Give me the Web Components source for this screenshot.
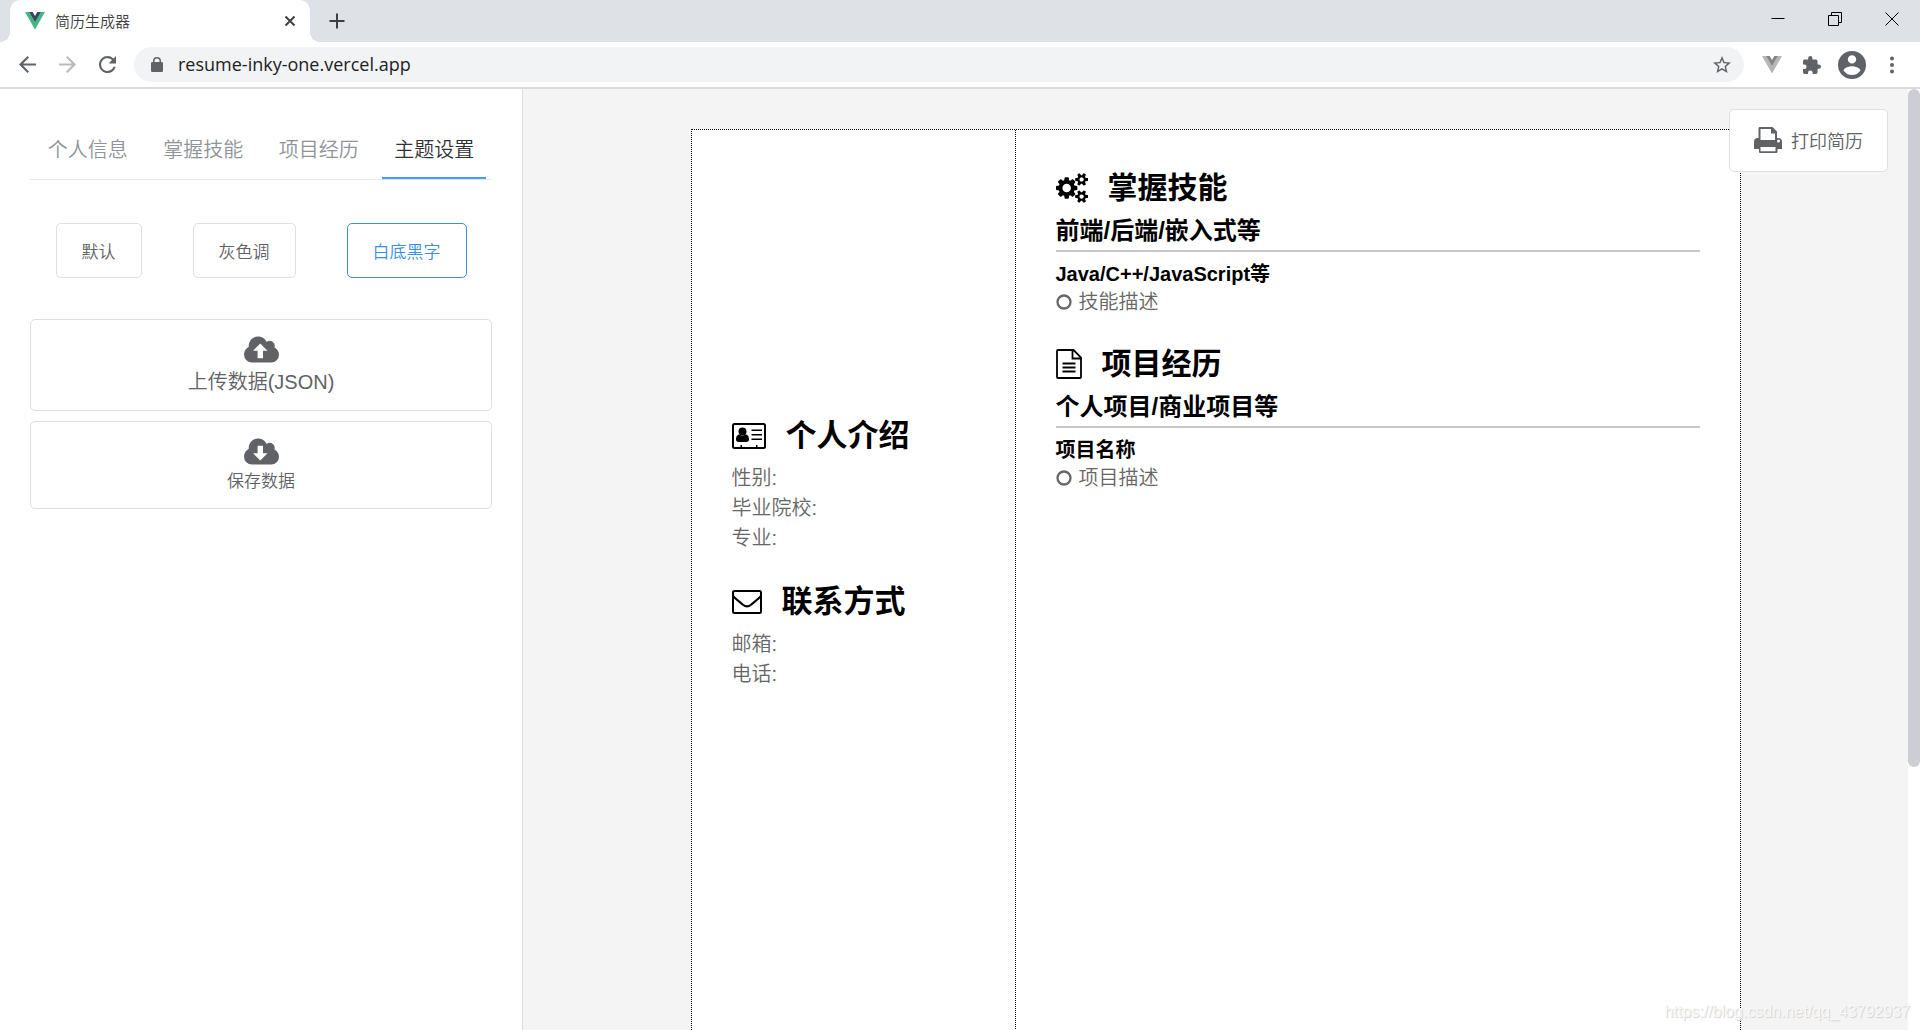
<!DOCTYPE html>
<html lang="zh-CN">
<head>
<meta charset="utf-8">
<title>简历生成器</title>
<style>
html,body{margin:0;height:100%;overflow:hidden}
body{font-family:"Liberation Sans","Noto Sans CJK SC",sans-serif;font-weight:350;color:#606266;background:#fff}
</style>
</head>
<body>
<browser-window>
  <tab-strip slot="tabs">简历生成器</tab-strip>
  <address-bar slot="toolbar" url="resume-inky-one.vercel.app"></address-bar>
  <side-panel slot="page">
    <tab-nav slot="nav" items="个人信息,掌握技能,项目经历,主题设置" active="3"></tab-nav>
    <theme-button slot="themes">默认</theme-button>
    <theme-button slot="themes">灰色调</theme-button>
    <theme-button slot="themes" active>白底黑字</theme-button>
    <data-button icon="cloud-up" large>上传数据(JSON)</data-button>
    <data-button icon="cloud-down">保存数据</data-button>
  </side-panel>
  <resume-stage slot="page">
    <resume-sheet>
      <resume-section slot="aside" icon="id-card" heading="个人介绍" class="aside">
        <info-line>性别:</info-line>
        <info-line>毕业院校:</info-line>
        <info-line>专业:</info-line>
      </resume-section>
      <resume-section slot="aside" icon="mail" heading="联系方式" class="aside">
        <info-line>邮箱:</info-line>
        <info-line>电话:</info-line>
      </resume-section>
      <resume-section icon="cogs" heading="掌握技能">
        <resume-entry category="前端/后端/嵌入式等" name="Java/C++/JavaScript等">技能描述</resume-entry>
      </resume-section>
      <resume-section icon="file" heading="项目经历">
        <resume-entry category="个人项目/商业项目等" name="项目名称">项目描述</resume-entry>
      </resume-section>
    </resume-sheet>
    <print-button slot="float">打印简历</print-button>
  </resume-stage>
  <page-mark slot="mark">https://blog.csdn.net/qq_43792937</page-mark>
</browser-window>

<script>
const ICONS = {
  vue: [20,18,'<path fill="#41b883" d="M0 0h4l6 10.200L16 0h4L10 17.500z"/><path fill="#35495e" d="M4 0h3.700L10 4l2.300-4H16l-6 10.300z"/>'],
  'vue-grey': [20,18,'<path fill="#b5b5b5" d="M0 0h4l6 10.200L16 0h4L10 17.500z"/><path fill="#858585" d="M4 0h3.700L10 4l2.300-4H16l-6 10.300z"/>'],
  close: [12,12,'<path d="M1.500 1.500l9 9m0-9l-9 9" fill="none" stroke="currentColor" stroke-width="2"/>'],
  plus: [16,16,'<path d="M8 .5v15M.5 8h15" fill="none" stroke="currentColor" stroke-width="2"/>'],
  back: [16,16,'<path fill="currentColor" d="M16 7H3.830l5.590-5.590L8 0 0 8l8 8 1.410-1.410L3.830 9H16z"/>'],
  forward: [16,16,'<path fill="currentColor" d="M8 0L6.590 1.410 12.170 7H0v2h12.170l-5.580 5.590L8 16l8-8z"/>'],
  reload: [16,16,'<path fill="currentColor" d="M13.650 2.350A7.960 7.960 0 0 0 8 0a8 8 0 1 0 7.730 10h-2.080A6 6 0 1 1 8 2c1.660 0 3.140.690 4.220 1.780L9 7h7V0z"/>'],
  lock: [12,15,'<path fill="currentColor" fill-rule="evenodd" d="M1.300 5H2V4a4 4 0 0 1 8 0v1h.700A1.300 1.300 0 0 1 12 6.300v7.400a1.300 1.300 0 0 1-1.300 1.300H1.300A1.300 1.300 0 0 1 0 13.700V6.300A1.300 1.300 0 0 1 1.300 5zm2.200 0h5V4a2.500 2.500 0 0 0-5 0z"/>'],
  star: [20,19,'<path fill="currentColor" d="M20 7.240l-7.190-.620L10 0 7.190 6.630 0 7.240l5.460 4.730L3.820 19 10 15.270 16.180 19l-1.630-7.030zM10 13.400l-3.760 2.270 1-4.280-3.320-2.880 4.380-.380L10 4.100l1.710 4.040 4.380.380-3.320 2.880 1 4.280z"/>'],
  puzzle: [21,21,'<path fill="currentColor" d="M18.500 10H17V6a2 2 0 0 0-2-2h-4V2.500a2.500 2.500 0 0 0-5 0V4H2a2 2 0 0 0-2 2v3.800h1.500a2.700 2.700 0 0 1 0 5.400H0V19a2 2 0 0 0 2 2h3.800v-1.500a2.700 2.700 0 0 1 5.400 0V21H15a2 2 0 0 0 2-2v-4h1.500a2.500 2.500 0 0 0 0-5z"/>'],
  account: [20,20,'<path fill="currentColor" d="M10 0a10 10 0 1 0 0 20 10 10 0 0 0 0-20zm0 3a3 3 0 1 1 0 6 3 3 0 0 1 0-6zm0 14.200a7.200 7.200 0 0 1-6-3.220c.030-1.990 4-3.080 6-3.080 1.990 0 5.970 1.090 6 3.080a7.200 7.200 0 0 1-6 3.220z"/>'],
  dots: [4,18,'<g fill="currentColor"><circle cx="2" cy="2.500" r="2"/><circle cx="2" cy="9" r="2"/><circle cx="2" cy="15.500" r="2"/></g>'],
  min: [14,14,'<path stroke="currentColor" d="M.5 6.500h13"/>'],
  restore: [14,14,'<path fill="none" stroke="currentColor" d="M.5 3.500h10v10H.5zM3.500 3V.5h10v10H11"/>'],
  exit: [14,14,'<path fill="none" stroke="currentColor" d="M.5.500l13 13m0-13l-13 13"/>'],
  'cloud-up': [35,27,'<path fill="currentColor" d="M8 26.500A8 8 0 0 1 0 18.500c0-3.300 1.900-6 4.700-7.500C4.500 4.800 8.500.5 14 .5c4 0 7.100 2.200 8.600 5.500a5 5 0 0 1 7.800 5.600c2.800 1.300 4.600 4 4.600 7.100a7.800 7.800 0 0 1-7.800 7.800z"/><path fill="#fff" d="M16.300 7.500l7.200 7.200H19v7.500h-5.400v-7.500H9.100z"/>'],
  'cloud-down': [35,27,'<path fill="currentColor" d="M8 26.500A8 8 0 0 1 0 18.500c0-3.300 1.900-6 4.700-7.500C4.500 4.800 8.500.5 14 .5c4 0 7.100 2.200 8.600 5.500a5 5 0 0 1 7.800 5.600c2.800 1.300 4.600 4 4.600 7.100a7.800 7.800 0 0 1-7.800 7.800z"/><path fill="#fff" d="M16.300 22.500l7.200-7.200H19V7.800h-5.400v7.500H9.100z"/>'],
  printer: [28,26,'<path fill="currentColor" fill-rule="evenodd" d="M6 0h12.500L23 4.500V11h1.500c2 0 3.500 1.500 3.500 3.500V22h-4.500v2.500c0 1-.5 1.500-1.500 1.500H6.500c-1 0-1.500-.5-1.500-1.500V22H0v-7.500C0 12.500 1.500 11 3.500 11H4.500V1.500C4.500.5 5 0 6 0zm.5 2v11H21V6.500h-4V2zm18 10.500a1.500 1.500 0 1 0 0 3 1.500 1.500 0 0 0 0-3zM6.500 20v4.300h15V20z"/>'],
  'id-card': [34,26,'<rect x="1" y="1" width="32" height="24" rx="1.500" fill="none" stroke="currentColor" stroke-width="2"/><g fill="currentColor"><circle cx="10.500" cy="8.500" r="4"/><path d="M7.500 11.500c-2.500 0-3.500 2.500-3.500 5 0 1.500 1 2.500 2.500 2.500h8c1.500 0 2.500-1 2.500-2.500 0-2.500-1-5-3.500-5-1.800 1.500-4.200 1.500-6 0zM19.500 6.500H30v1.600H19.500zM19.500 11H30v1.600H19.500zM19.500 15.500H30v1.600H19.500zM8.500 22h1.500v3H8.500zM24 22h1.500v3H24z"/></g>'],
  mail: [30,24,'<rect x="1" y="1" width="28" height="22" rx="1.500" fill="none" stroke="currentColor" stroke-width="2"/><path d="M1 6c3 3.500 7 6 10 8.700 2.800 2.300 5.200 2.300 8 0C22 12 26 9.500 29 6" fill="none" stroke="currentColor" stroke-width="2"/>'],
  file: [26,30,'<path d="M2 1h15.500L25 8.500V28a1 1 0 0 1-1 1H2a1 1 0 0 1-1-1V2a1 1 0 0 1 1-1zM16.500 1.500V9.500H25M6.500 14.500h13M6.500 18.500h13M6.500 22.500h13" fill="none" stroke="currentColor" stroke-width="1.800"/>'],
  ring: [16,16,'<circle cx="8" cy="8" r="6.500" fill="none" stroke="currentColor" stroke-width="2.300"/>'],
  cogs: [1920,1792,'<path fill="currentColor" d="M896 896q0-106-75-181t-181-75-181 75-75 181 75 181 181 75 181-75 75-181zm768 512q0-52-38-90t-90-38-90 38-38 90q0 53 37.500 90.500t90.500 37.500 90.500-37.500 37.500-90.500zm0-1024q0-52-38-90t-90-38-90 38-38 90q0 53 37.500 90.500t90.500 37.500 90.500-37.500 37.500-90.500zm-384 421v185q0 10-7 19.500t-16 10.500l-155 24q-11 35-32 76 34 48 90 115 7 11 7 20 0 12-7 19-23 30-82.500 89.500t-78.500 59.500q-11 0-21-7l-115-90q-37 19-77 31-11 108-23 155-7 24-30 24h-186q-11 0-20-7.500t-10-17.500l-23-153q-34-10-75-31l-118 89q-7 7-20 7-11 0-21-8-144-133-144-160 0-9 7-19 10-14 41-53t47-61q-23-44-35-82l-152-24q-10-1-17-9.500t-7-19.500v-185q0-10 7-19.500t16-10.500l155-24q11-35 32-76-34-48-90-115-7-11-7-20 0-12 7-20 22-30 82-89t79-59q11 0 21 7l115 90q34-18 77-32 11-108 23-154 7-24 30-24h186q11 0 20 7.500t10 17.500l23 153q34 10 75 31l118-89q8-7 20-7 11 0 21 8 144 133 144 160 0 8-7 19-12 16-42 54t-45 60q23 48 34 82l152 23q10 2 17 10.500t7 19.500zm640 533v140q0 16-149 31-12 27-30 52 51 113 51 138 0 4-4 7-122 71-124 71-8 0-46-47t-52-68q-20 2-30 2t-30-2q-14 21-52 68t-46 47q-2 0-124-71-4-3-4-7 0-25 51-138-18-25-30-52-149-15-149-31v-140q0-16 149-31 13-29 30-52-51-113-51-138 0-4 4-7 4-2 35-20t59-34 30-16q8 0 46 46.500t52 67.500q20-2 30-2t30 2q51-71 92-112l6-2q4 0 124 70 4 3 4 7 0 25-51 138 17 23 30 52 149 15 149 31zm0-1024v140q0 16-149 31-12 27-30 52 51 113 51 138 0 4-4 7-122 71-124 71-8 0-46-47t-52-68q-20 2-30 2t-30-2q-14 21-52 68t-46 47q-2 0-124-71-4-3-4-7 0-25 51-138-18-25-30-52-149-15-149-31v-140q0-16 149-31 13-29 30-52-51-113-51-138 0-4 4-7 4-2 35-20t59-34 30-16q8 0 46 46.500t52 67.500q20-2 30-2t30 2q51-71 92-112l6-2q4 0 124 70 4 3 4 7 0 25-51 138 17 23 30 52 149 15 149 31z"/>']
};
const icon = (name, w) => {
  const [vw, vh, body] = ICONS[name];
  const width = w || vw;
  return `<svg class="i" aria-hidden="true" width="${width}" height="${Math.round(width * vh / vw)}" viewBox="0 0 ${vw} ${vh}">${body}</svg>`;
};
const BASE = `:host,*{box-sizing:border-box}.i{display:block;flex:none}button{font:inherit;color:inherit;background:none;border:0;padding:0;margin:0;cursor:pointer}`;
const define = (tag, css, html) => customElements.define(tag, class extends HTMLElement {
  constructor() { super(); this.attachShadow({ mode: 'open' }); }
  connectedCallback() { this.shadowRoot.innerHTML = `<style>${BASE}${css}</style>${html(this)}`; }
});

define('browser-window', `
  :host{display:flex;flex-direction:column;height:100vh;position:relative;overflow:hidden}
  main{flex:1;min-height:0;display:flex;border-top:2px solid #d8dae0;overflow:hidden}
  .track{flex:none;width:12px;background:#fff}
  .thumb{height:72%;border-radius:6px;background:#cdced3}`,
  () => `<slot name="tabs"></slot><slot name="toolbar"></slot>
  <main><slot name="page"></slot><div class="track"><div class="thumb"></div></div></main><slot name="mark"></slot>`);

define('tab-strip', `
  :host{display:flex;height:42px;background:#dee1e6;color:#3c4043;font-size:15px;flex:none}
  .tab{display:flex;align-items:center;gap:10px;width:300px;margin-left:10px;padding:0 14px 0 15px;background:#fff;border-radius:10px 10px 0 0;position:relative}
  .tab::before,.tab::after{content:"";position:absolute;bottom:0;width:10px;height:10px}
  .tab::before{left:-10px;background:radial-gradient(circle at 0 0,#dee1e6 10px,#fff 10px)}
  .tab::after{right:-10px;background:radial-gradient(circle at 100% 0,#dee1e6 10px,#fff 10px)}
  .title{flex:1;padding-bottom:2px}
  .add{padding:0 19px}
  .win{display:flex;margin-left:auto;color:#000}
  .win button{width:57px;display:grid;place-items:center;padding-bottom:5px}`,
  () => `<div class="tab">${icon('vue')}<span class="title"><slot></slot></span><button aria-label="关闭标签页">${icon('close')}</button></div>
  <button class="add" aria-label="新标签页">${icon('plus')}</button>
  <div class="win"><button aria-label="最小化">${icon('min')}</button><button aria-label="还原">${icon('restore')}</button><button aria-label="关闭">${icon('exit')}</button></div>`);

define('address-bar', `
  :host{display:flex;align-items:center;height:45px;flex:none;background:#fff;color:#5f6368;padding:0 26px 0 19px}
  .nav{display:flex;gap:23px;margin-right:18px}
  .off{color:#bababb}
  form{flex:1;display:flex;align-items:center;gap:15px;height:35px;border-radius:18px;background:#f1f3f4;padding:0 13px 0 17px}
  input{flex:1;min-width:0;border:0;outline:0;background:none;padding:0 0 2px;color:#202124;font:400 18px/24px "Open Sans","Noto Sans CJK SC",sans-serif}
  .ext{display:flex;align-items:center;margin-left:18px;gap:21px}
  .who{margin:0 3px 0 -4px}`,
  el => `<div class="nav"><button aria-label="后退">${icon('back',17)}</button><button class="off" aria-label="前进">${icon('forward',17)}</button><button aria-label="重新加载">${icon('reload',17)}</button></div>
  <form>${icon('lock')}<input type="text" aria-label="网址" value="${el.getAttribute('url')}"><button type="button" aria-label="收藏">${icon('star',18)}</button></form>
  <div class="ext"><button aria-label="Vue">${icon('vue-grey')}</button><button aria-label="扩展程序">${icon('puzzle',18)}</button><button class="who" aria-label="用户">${icon('account',28)}</button><button aria-label="菜单">${icon('dots')}</button></div>`);

define('side-panel', `
  :host{display:flex;flex-direction:column;flex:0 0 523px;border-right:1px solid #dcdcdc;background:#fff;padding:30px}
  .themes{display:flex;justify-content:space-around;margin:43px 0 41px}
  .data{display:flex;flex-direction:column;gap:10px}`,
  () => `<slot name="nav"></slot><div class="themes"><slot name="themes"></slot></div><div class="data"><slot></slot></div>`);

define('tab-nav', `
  :host{display:block;border-bottom:1px solid #e4e7ed}
  nav{display:flex;justify-content:space-around}
  button{width:104px;height:60px;font-size:20px;color:#909399;border-bottom:2px solid transparent}
  .on{color:#303133;border-color:#409eff}`,
  el => `<nav role="tablist">${el.getAttribute('items').split(',').map((t, i) => {
    const on = i == el.getAttribute('active');
    return `<button role="tab" aria-selected="${on}" class="${on ? 'on' : ''}">${t}</button>`;
  }).join('')}</nav>`);

define('theme-button', `
  :host{display:block}
  button{height:55px;padding:0 25px;border:1px solid #dcdfe6;border-radius:5px;background:#fff;font-size:17px}
  :host([active]) button{color:#3a8ee6;border-color:#3a8ee6}`,
  () => `<button><slot></slot></button>`);

define('data-button', `
  :host{display:block;font-size:17px;line-height:24px}
  :host([large]){font-size:20px;line-height:28px}
  button{display:flex;flex-direction:column;align-items:center;gap:5px;width:100%;padding:16px 16px 14px;border:1px solid #dcdfe6;border-radius:5px;background:#fff}`,
  el => `<button>${icon(el.getAttribute('icon'))}<span><slot></slot></span></button>`);

define('resume-stage', `
  :host{display:flex;flex:1;justify-content:center;align-items:flex-start;background:#f4f4f4;padding:40px 0;position:relative;overflow:hidden}
  ::slotted([slot=float]){position:absolute;top:20px;right:20px}`,
  () => `<slot></slot><slot name="float"></slot>`);

define('resume-sheet', `
  :host{display:flex;flex:0 0 1050px;aspect-ratio:210/297;border:1px dotted #000;background:#fff}
  aside,article{display:flex;flex-direction:column}
  aside{flex:0 0 324px;border-right:1px dotted #000;padding:286px 40px 0;gap:29px}
  article{flex:1;padding:38px 40px 0;gap:28px}`,
  () => `<aside><slot name="aside"></slot></aside><article><slot></slot></article>`);

define('resume-section', `
  :host{display:block}
  h2{display:flex;align-items:center;gap:20px;height:40px;margin:0;color:#000;font-size:30px;line-height:40px;font-weight:700}
  :host(.aside) h2{font-size:31px;margin-bottom:7px}`,
  el => `<h2>${icon(el.getAttribute('icon'), el.getAttribute('icon') === 'cogs' ? 32 : 0)}<span>${el.getAttribute('heading')}</span></h2><slot></slot>`);

define('info-line', `:host{display:block;font-size:20px;line-height:30px;color:#666}`, () => `<slot></slot>`);

define('resume-entry', `
  :host{display:block;font-size:20px;color:#666}
  h3,h4{margin:0;color:#000;font-weight:700}
  h3{font-size:24px;line-height:36px;padding:5px 0 1px;border-bottom:2px solid #c8c8c8;margin-bottom:8px}
  h4{font-size:20px;line-height:28px}
  p{display:flex;align-items:center;gap:7px;margin:0;line-height:28px}`,
  el => `<h3>${el.getAttribute('category')}</h3><h4>${el.getAttribute('name')}</h4><p>${icon('ring')}<span><slot></slot></span></p>`);

define('print-button', `
  :host{display:block}
  button{display:flex;align-items:center;gap:9px;height:63px;padding:0 24px 2px;border:1px solid #dcdfe6;border-radius:5px;background:#fff;font-size:18px}`,
  () => `<button>${icon('printer')}<span><slot></slot></span></button>`);

define('page-mark', `
  :host{position:absolute;right:10px;bottom:7px;font-size:16px;line-height:22px;font-weight:400;color:#f8f8f8;text-shadow:1px 1px 1px #d0d0d0;pointer-events:none}`,
  () => `<slot></slot>`);
</script>
</body>
</html>
